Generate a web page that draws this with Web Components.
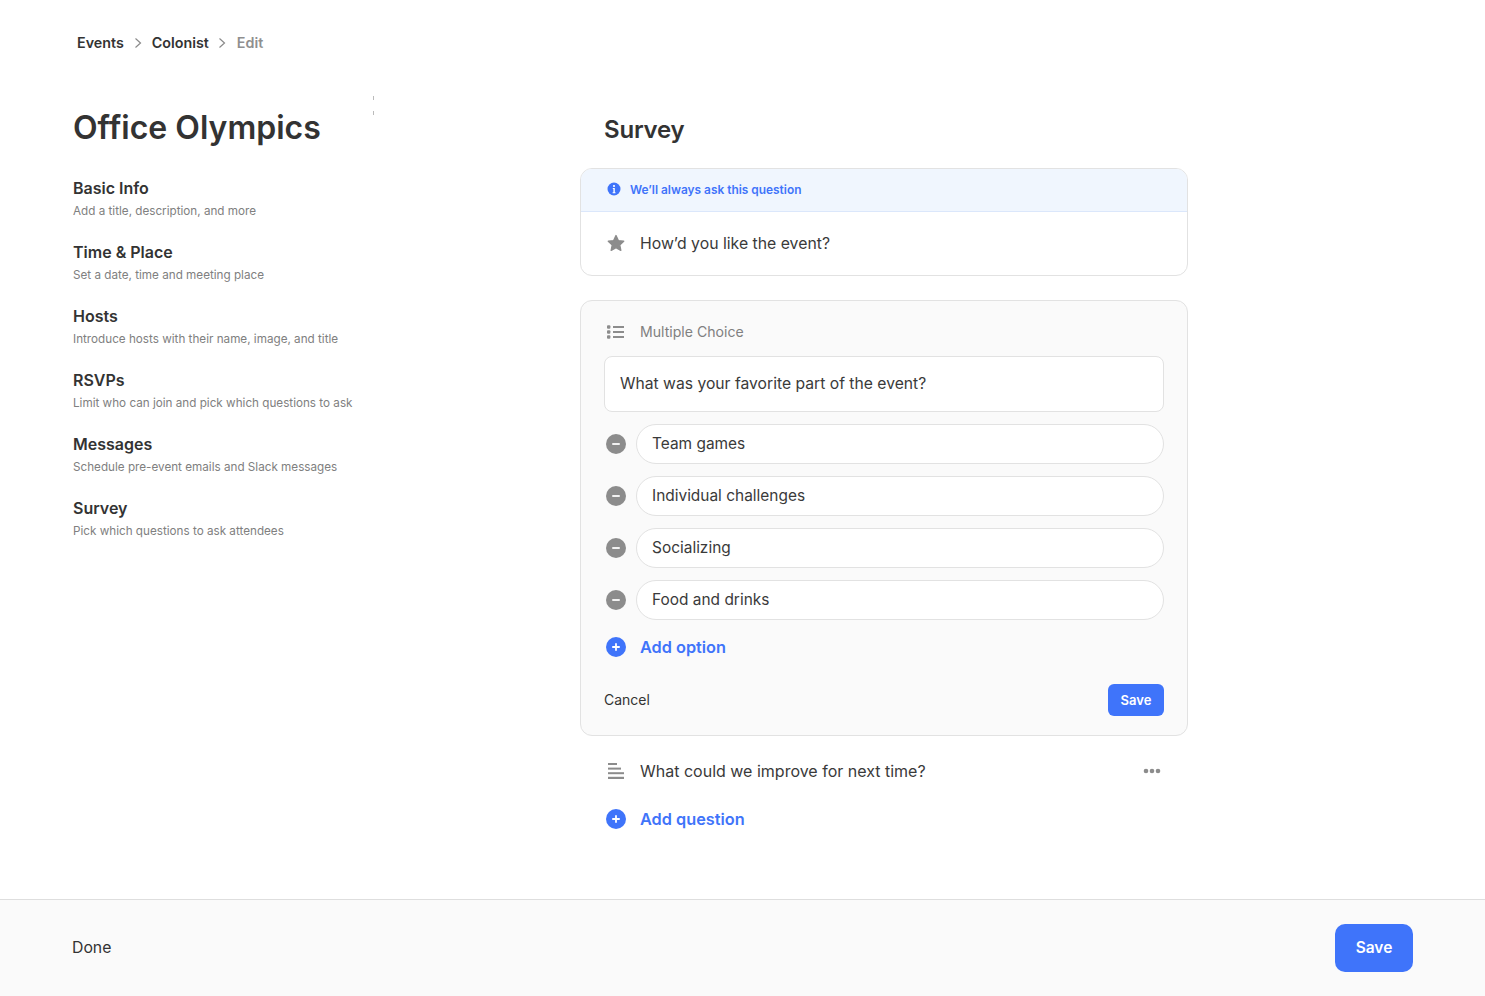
<!DOCTYPE html>
<html lang="en">
<head>
<meta charset="utf-8">
<title>Office Olympics</title>
<style>
  html, body { margin: 0; padding: 0; height: 100%; background: #fff; }
  body { font-family: Inter, "Liberation Sans", sans-serif; color: #333; }
</style>
</head>
<body>
<edit-page>
  <bread-crumbs slot="crumbs"></bread-crumbs>
  <side-nav slot="side" heading="Office Olympics">
    <nav-item heading="Basic Info" sub="Add a title, description, and more"></nav-item>
    <nav-item heading="Time &amp; Place" sub="Set a date, time and meeting place"></nav-item>
    <nav-item heading="Hosts" sub="Introduce hosts with their name, image, and title"></nav-item>
    <nav-item heading="RSVPs" sub="Limit who can join and pick which questions to ask"></nav-item>
    <nav-item heading="Messages" sub="Schedule pre-event emails and Slack messages"></nav-item>
    <nav-item heading="Survey" sub="Pick which questions to ask attendees"></nav-item>
  </side-nav>
  <survey-panel slot="main">
    <fixed-question notice="We’ll always ask this question" text="How’d you like the event?"></fixed-question>
    <choice-editor type="Multiple Choice" question="What was your favorite part of the event?">
      <option-row text="Team games"></option-row>
      <option-row text="Individual challenges"></option-row>
      <option-row text="Socializing"></option-row>
      <option-row text="Food and drinks"></option-row>
    </choice-editor>
    <text-question text="What could we improve for next time?"></text-question>
    <add-link inset label="Add question"></add-link>
  </survey-panel>
  <footer-bar slot="footer"></footer-bar>
</edit-page>

<script>
function define(name, html, props) {
  customElements.define(name, class extends HTMLElement {
    constructor() {
      super();
      this.attachShadow({ mode: 'open' });
    }
    connectedCallback() {
      let out = html;
      (props || []).forEach(p => {
        const v = (this.getAttribute(p) || '').replace(/&/g, '&amp;');
        out = out.split('{{' + p + '}}').join(v);
      });
      this.shadowRoot.innerHTML = out;
    }
  });
}

const FONT = 'font-family: Inter, "Liberation Sans", sans-serif;';

define('edit-page', `
  <style>
    :host { display: flex; flex-direction: column; height: 100vh; ${FONT} }
    .crumbs { padding: 34px 0 0 77px; height: 96px; box-sizing: border-box; }
    .body { flex: 1; display: flex; min-height: 0; }
    .side { width: 580px; box-sizing: border-box; padding-left: 73px; position: relative; }
    .mark { position: absolute; left: 373px; top: 0; width: 1px; height: 19px;
      background: linear-gradient(#bbb 0 4px, transparent 4px 15px, #bbb 15px 19px); }
    .main { width: 608px; }
  </style>
  <div class="crumbs"><slot name="crumbs"></slot></div>
  <div class="body">
    <div class="side"><span class="mark"></span><slot name="side"></slot></div>
    <div class="main"><slot name="main"></slot></div>
  </div>
  <slot name="footer"></slot>
`);

define('bread-crumbs', `
  <style>
    :host { display: flex; align-items: center; font-size: 14.3px; line-height: 18px; font-weight: 600; color: #333; }
    svg { width: 8px; height: 12px; fill: none; stroke: #8a8a8a; stroke-width: 1.2; margin: 0 11px 0 9px; flex: none; }
    svg.first { margin: 0 10px 0 10px; }
    .edit { color: #8f8f8f; }
  </style>
  <span>Events</span>
  <svg class="first" viewBox="0 0 8 12"><path d="M1.5 1.5 6.5 6 1.5 10.5"/></svg>
  <span>Colonist</span>
  <svg viewBox="0 0 8 12"><path d="M1.5 1.5 6.5 6 1.5 10.5"/></svg>
  <span class="edit">Edit</span>
`);

define('side-nav', `
  <style>
    :host { display: block; }
    h1 { margin: 0; font-size: 32px; line-height: 40px; font-weight: 600; color: #333; padding-top: 12px; height: 69px; }
    .list { display: flex; flex-direction: column; gap: 18px; }
  </style>
  <h1>{{heading}}</h1>
  <div class="list"><slot></slot></div>
`, ['heading']);

define('nav-item', `
  <style>
    :host { display: block; height: 46px; }
    .t { font-size: 16px; line-height: 22px; font-weight: 600; color: #333; }
    .s { font-size: 11.7px; line-height: 24px; color: #808080; }
  </style>
  <div class="t">{{heading}}</div>
  <div class="s">{{sub}}</div>
`, ['heading', 'sub']);

define('survey-panel', `
  <style>
    :host { display: flex; flex-direction: column; }
    h2 { margin: 0; font-size: 24px; line-height: 32px; font-weight: 600; color: #333; padding: 18px 0 0 24px; height: 72px; box-sizing: border-box; letter-spacing: -0.2px; }
    .stack { display: flex; flex-direction: column; }
  </style>
  <h2>Survey</h2>
  <div class="stack"><slot></slot></div>
`);

define('fixed-question', `
  <style>
    :host { display: block; border: 1px solid #e2e2e2; border-radius: 12px; overflow: hidden; margin-bottom: 24px; height: 108px; box-sizing: border-box; }
    .note { display: flex; align-items: center; gap: 9px; height: 43px; box-sizing: border-box; padding: 0 0 2px 26px; background: #f0f6fe; border-bottom: 1px solid #dbe7fb; color: #3f74fa; font-size: 11.9px; font-weight: 600; }
    .note svg { width: 14px; height: 14px; }
    .q { display: flex; align-items: center; gap: 14px; height: 63px; padding-left: 25px; font-size: 15.8px; color: #3a3a3a; }
    .q svg { width: 20px; height: 20px; margin-bottom: 1px; }
  </style>
  <div class="note">
    <svg viewBox="0 0 14 14"><circle cx="7" cy="7" r="6.5" fill="#3f74fa"/><circle cx="7" cy="4" r="1.1" fill="#fff"/><path d="M5.8 6h2v4.2h.7v1H5.6v-1h.8V7h-.6z" fill="#fff"/></svg>
    <span>{{notice}}</span>
  </div>
  <div class="q">
    <svg viewBox="0 0 20 20"><path d="M10 2.6l2.3 5 5.4.6-4 3.7 1.1 5.4L10 14.6l-4.8 2.7 1.1-5.4-4-3.7 5.4-.6z" fill="#8c8c8c" stroke="#8c8c8c" stroke-width="1.4" stroke-linejoin="round"/></svg>
    <span>{{text}}</span>
  </div>
`, ['notice', 'text']);

define('choice-editor', `
  <style>
    :host { display: block; border: 1px solid #e2e2e2; border-radius: 12px; background: #fafafa; height: 436px; box-sizing: border-box; padding: 0 23px; }
    .type { display: flex; align-items: center; gap: 15px; height: 55px; box-sizing: border-box; padding: 6px 0 0 3px; font-size: 14.1px; color: #808080; }
    .type svg { width: 18px; height: 14px; }
    .question { height: 56px; box-sizing: border-box; border: 1px solid #e2e2e2; border-radius: 8px; background: #fff; display: flex; align-items: center; padding: 0 0 2px 15px; font-size: 15.7px; color: #3a3a3a; margin-bottom: 12px; }
    .opts { display: flex; flex-direction: column; gap: 12px; }
    .actions { display: flex; align-items: center; justify-content: space-between; margin-top: 10px; font-size: 14px; color: #333; }
    .cancel { padding-bottom: 2px; }
    .btn { width: 56px; height: 32px; border-radius: 6px; background: #3f74fa; color: #fff; font-size: 13px; font-weight: 600; display: flex; align-items: center; justify-content: center; }
    add-link { height: 54px; }
  </style>
  <div class="type">
    <svg viewBox="0 0 18 14"><g fill="#8c8c8c"><rect x="0" y="0.3" width="3.4" height="3.4" rx="1"/><rect x="0" y="5.3" width="3.4" height="3.4" rx="1"/><rect x="0" y="10.3" width="3.4" height="3.4" rx="1"/><rect x="6" y="1" width="11" height="2"/><rect x="6" y="6" width="11" height="2"/><rect x="6" y="11" width="11" height="2"/></g></svg>
    <span>{{type}}</span>
  </div>
  <div class="question">{{question}}</div>
  <div class="opts"><slot></slot></div>
  <add-link label="Add option"></add-link>
  <div class="actions"><span class="cancel">Cancel</span><span class="btn">Save</span></div>
`, ['type', 'question']);

define('option-row', `
  <style>
    :host { display: flex; align-items: center; gap: 10px; height: 40px; padding-left: 2px; }
    svg { width: 20px; height: 20px; flex: none; margin-bottom: 1px; }
    .pill { flex: 1; height: 40px; box-sizing: border-box; border: 1px solid #e2e2e2; border-radius: 20px; background: #fff; display: flex; align-items: center; padding: 0 0 2px 15px; font-size: 15.45px; color: #3a3a3a; }
  </style>
  <svg viewBox="0 0 20 20"><circle cx="10" cy="10" r="10" fill="#8c8c8c"/><rect x="6" y="9" width="8" height="2" rx="1" fill="#f2f2f2"/></svg>
  <div class="pill">{{text}}</div>
`, ['text']);

define('add-link', `
  <style>
    :host { display: flex; align-items: center; gap: 14px; height: 48px; padding-left: 2px; color: #3f74fa; font-size: 16.3px; font-weight: 600; }
    :host([inset]) { height: 26px; padding-left: 26px; }
    svg { width: 20px; height: 20px; flex: none; }
  </style>
  <svg viewBox="0 0 20 20"><circle cx="10" cy="10" r="10" fill="#3f74fa"/><rect x="6" y="9.1" width="8" height="1.8" rx=".9" fill="#fff"/><rect x="9.1" y="6" width="1.8" height="8" rx=".9" fill="#fff"/></svg>
  <span>{{label}}</span>
`, ['label']);

define('text-question', `
  <style>
    :host { display: flex; align-items: center; height: 70px; padding: 0 27px 0 28px; font-size: 16px; color: #3a3a3a; }
    .bars { width: 17px; height: 16px; flex: none; margin-right: 15px; }
    span { flex: 1; }
    .more { width: 18px; height: 6px; flex: none; }
  </style>
  <svg class="bars" viewBox="0 0 17 16"><g fill="#8c8c8c"><rect y="0" width="9" height="2"/><rect y="4.6" width="13" height="2"/><rect y="9.2" width="16" height="2"/><rect y="13.8" width="16" height="2.2"/></g></svg>
  <span>{{text}}</span>
  <svg class="more" viewBox="0 0 18 6"><g fill="#8c8c8c"><circle cx="3" cy="3" r="2.3"/><circle cx="9" cy="3" r="2.3"/><circle cx="15" cy="3" r="2.3"/></g></svg>
`, ['text']);

define('footer-bar', `
  <style>
    :host { display: flex; align-items: center; justify-content: space-between; flex: none; height: 97px; box-sizing: border-box; border-top: 1px solid #dedede; background: #fafafa; padding: 0 72px; font-size: 15.8px; color: #333; }
    .done { padding-bottom: 2px; }
    .save { width: 78px; height: 48px; box-sizing: border-box; padding-bottom: 2px; border-radius: 10px; background: #3f74fa; color: #fff; font-size: 15.5px; font-weight: 600; display: flex; align-items: center; justify-content: center; }
  </style>
  <span class="done">Done</span>
  <span class="save">Save</span>
`);
</script>
</body>
</html>
